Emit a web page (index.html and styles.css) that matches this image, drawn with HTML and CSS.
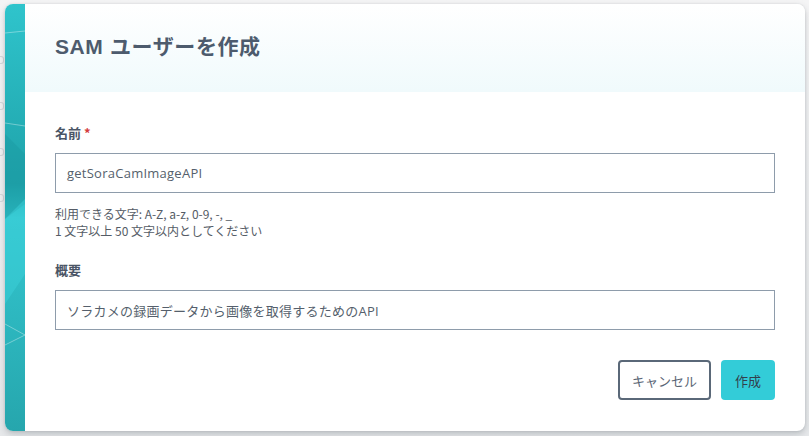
FILE: index.html
```html
<!DOCTYPE html>
<html lang="ja">
<head>
<meta charset="utf-8">
<link rel="stylesheet" href="styles.css">
</head>
<body>
<div class="backdrop">
  <div class="ghost">
    <i></i><i></i><i></i><i></i>
  </div>
  <div class="modal">
    <div class="strip">
      <svg width="20" height="427" viewBox="0 0 20 427" preserveAspectRatio="none">
        <defs>
          <linearGradient id="g" x1="0" y1="0" x2="0" y2="1">
            <stop offset="0" stop-color="#2fc4cc"/>
            <stop offset="0.42" stop-color="#1fa3aa"/>
            <stop offset="0.5" stop-color="#33c6cf"/>
            <stop offset="1" stop-color="#26a6ad"/>
          </linearGradient>
        </defs>
        <rect width="20" height="427" fill="url(#g)"/>
        <polygon points="0,130 20,150 20,200 0,215" fill="#1b9aa1" opacity="0.45"/>
        <polygon points="0,215 20,195 20,270 0,300" fill="#3fd3db" opacity="0.45"/>
        <line x1="0" y1="29" x2="20" y2="27" stroke="#ffffff" stroke-opacity="0.6" stroke-width="0.6"/>
        <line x1="0" y1="119" x2="20" y2="122" stroke="#ffffff" stroke-opacity="0.6" stroke-width="0.6"/>
        <line x1="0" y1="320" x2="20" y2="331" stroke="#ffffff" stroke-opacity="0.6" stroke-width="0.6"/>
        <line x1="0" y1="341" x2="20" y2="331" stroke="#ffffff" stroke-opacity="0.6" stroke-width="0.6"/>
      </svg>
    </div>
    <div class="main">
      <div class="header">
        <h1 class="title">SAM ユーザーを作成</h1>
      </div>
      <div class="body">
        <div class="field">
          <label class="label">名前 <span class="req">*</span></label>
          <div class="input">getSoraCamImageAPI</div>
          <p class="help">利用できる文字: A-Z, a-z, 0-9, -, _<br>1 文字以上 50 文字以内としてください</p>
        </div>
        <div class="field field-2">
          <label class="label">概要</label>
          <div class="input">ソラカメの録画データから画像を取得するためのAPI</div>
        </div>
        <div class="actions">
          <button class="btn btn-cancel">キャンセル</button>
          <button class="btn btn-primary">作成</button>
        </div>
      </div>
    </div>
  </div>
</div>
</body>
</html>
```
FILE: styles.css
```css
* { box-sizing: border-box; }
html, body { margin: 0; padding: 0; }
body {
  width: 809px;
  height: 436px;
  overflow: hidden;
  background: #eceef0;
  font-family: "Noto Sans CJK JP", "Noto Sans", sans-serif;
  color: #4a5566;
}
.backdrop {
  position: relative;
  width: 809px;
  height: 436px;
  padding: 4px 4px 0 5px;
  background: linear-gradient(to bottom, #f4f4f5 0%, #e6e8ea 100%);
}
.ghost {
  position: absolute;
  left: 0;
  top: 56px;
  display: flex;
  flex-direction: column;
  gap: 38px;
}
.ghost i {
  display: block;
  width: 4px;
  height: 8px;
  border: 1px solid #d3d6da;
  border-left: none;
  border-radius: 0 3px 3px 0;
}
.modal {
  position: relative;
  display: flex;
  width: 800px;
  height: 427px;
  background: #ffffff;
  border-radius: 8px;
  overflow: hidden;
  box-shadow: 0 3px 6px rgba(60, 70, 80, 0.25), 0 0 2px rgba(60,70,80,0.15);
}
.strip {
  width: 20px;
  flex: none;
  display: flex;
}
.strip svg { display: block; }
.main {
  flex: 1;
  display: flex;
  flex-direction: column;
}
.header {
  height: 88px;
  padding: 30px 30px 0 30px;
  background: linear-gradient(to bottom, #ffffff 0%, #f0fafc 100%);
}
.title {
  margin: 0;
  font-family: "Liberation Sans", "Noto Sans CJK JP", sans-serif;
  font-size: 21px;
  line-height: 25px;
  font-weight: bold;
  color: #4d5b6d;
  letter-spacing: 0.6px;
}
.body {
  padding: 32px 30px 0 30px;
  display: flex;
  flex-direction: column;
}
.label {
  display: block;
  font-size: 13px;
  line-height: 18px;
  font-weight: bold;
  color: #4a5566;
  margin-bottom: 11px;
}
.req { color: #d43c3c; }
.input {
  height: 40px;
  border: 1px solid #8e9cab;
  padding: 0 11px;
  display: flex;
  align-items: center;
  font-family: "Open Sans", "Noto Sans CJK JP", sans-serif;
  font-size: 13px;
  letter-spacing: 0.25px;
  color: #555f6c;
  background: #fff;
}
.help {
  margin: 12px 0 0 0;
  font-size: 12px;
  line-height: 17px;
  color: #555c66;
}
.field-2 { margin-top: 22px; }
.actions {
  margin-top: 30px;
  display: flex;
  justify-content: flex-end;
  gap: 10px;
}
.btn {
  height: 40px;
  border-radius: 4px;
  font-family: "Noto Sans CJK JP", sans-serif;
  font-size: 13px;
  padding: 0;
  white-space: nowrap;
  cursor: pointer;
}
.btn-cancel {
  width: 93px;
  background: #fff;
  border: 2px solid #5a6878;
  color: #5a6575;
}
.btn-primary {
  width: 54px;
  background: #33ccd8;
  border: none;
  color: #33404c;
}
```
